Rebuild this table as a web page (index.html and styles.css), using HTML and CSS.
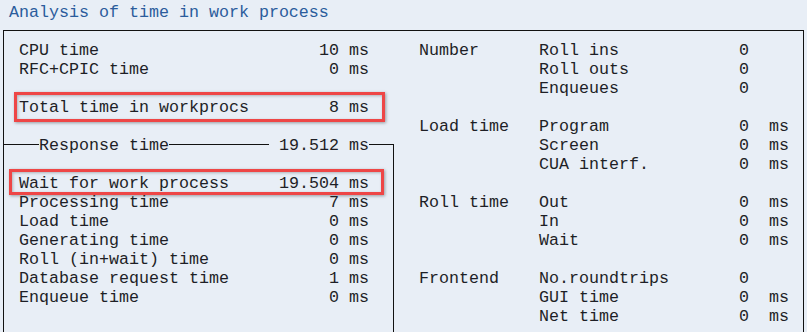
FILE: index.html
```html
<!DOCTYPE html>
<html>
<head>
<meta charset="utf-8">
<link rel="stylesheet" href="styles.css">
</head>
<body>
<div class="screen">
  <div class="title">Analysis of time in work process</div>
  <div class="frame">
    <div class="left">
      <div class="rows">
        <div class="row"><span>CPU time</span><span>10 ms</span></div>
        <div class="row"><span>RFC+CPIC time</span><span>0 ms</span></div>
        <div class="row"></div>
        <div class="row hl hl-total"><span>Total time in workprocs</span><span>8 ms</span></div>
        <div class="row"></div>
      </div>
      <div class="group">
        <div class="legend">
          <span class="ln ln-a"></span>
          <span class="legend-text">Response time</span>
          <span class="ln ln-b"></span>
          <span class="legend-val">19.512 ms</span>
          <span class="ln ln-c"></span>
        </div>
        <div class="rows">
          <div class="row"></div>
          <div class="row hl hl-wait"><span>Wait for work process</span><span>19.504 ms</span></div>
          <div class="row"><span>Processing time</span><span>7 ms</span></div>
          <div class="row"><span>Load time</span><span>0 ms</span></div>
          <div class="row"><span>Generating time</span><span>0 ms</span></div>
          <div class="row"><span>Roll (in+wait) time</span><span>0 ms</span></div>
          <div class="row"><span>Database request time</span><span>1 ms</span></div>
          <div class="row"><span>Enqueue time</span><span>0 ms</span></div>
        </div>
      </div>
    </div>
    <div class="right">
      <div class="rrow"><span>Number</span><span>Roll ins</span><span>0</span><span></span></div>
      <div class="rrow"><span></span><span>Roll outs</span><span>0</span><span></span></div>
      <div class="rrow"><span></span><span>Enqueues</span><span>0</span><span></span></div>
      <div class="rrow"></div>
      <div class="rrow"><span>Load time</span><span>Program</span><span>0</span><span>ms</span></div>
      <div class="rrow"><span></span><span>Screen</span><span>0</span><span>ms</span></div>
      <div class="rrow"><span></span><span>CUA interf.</span><span>0</span><span>ms</span></div>
      <div class="rrow"></div>
      <div class="rrow"><span>Roll time</span><span>Out</span><span>0</span><span>ms</span></div>
      <div class="rrow"><span></span><span>In</span><span>0</span><span>ms</span></div>
      <div class="rrow"><span></span><span>Wait</span><span>0</span><span>ms</span></div>
      <div class="rrow"></div>
      <div class="rrow"><span>Frontend</span><span>No.roundtrips</span><span>0</span><span></span></div>
      <div class="rrow"><span></span><span>GUI time</span><span>0</span><span>ms</span></div>
      <div class="rrow"><span></span><span>Net time</span><span>0</span><span>ms</span></div>
    </div>
  </div>
</div>
</body>
</html>
```

FILE: styles.css
```css
html, body {
  margin: 0;
  padding: 0;
  background: #e8eef6;
  overflow: hidden;
}

.screen {
  width: 807px;
  height: 332px;
  overflow: hidden;
  font-family: "Liberation Mono", "Courier New", monospace;
  font-size: 16.6667px;
  line-height: 19px;
  color: #1e1f26;
}

.row span,
.rrow span,
.legend span,
.title {
  white-space: pre;
}

.title {
  color: #2b5c9c;
  padding: 3px 0 0 9px;
  height: 19px;
  margin-bottom: 8px;
}

.frame {
  margin-left: 3px;
  width: 799px;
  height: 400px;
  border: 1px solid #111;
  border-bottom: none;
  padding-top: 10px;
  display: flex;
  align-items: flex-start;
}

.left {
  width: 390px;
  display: flex;
  flex-direction: column;
}

.rows {
  display: flex;
  flex-direction: column;
  padding-left: 15px;
}

.row {
  position: relative;
  width: 350px;
  height: 19px;
  display: flex;
  justify-content: space-between;
}

.hl::after {
  content: "";
  position: absolute;
  border: 3px solid #ee4646;
  box-shadow: 1px 1px 3px rgba(0, 0, 0, 0.35), inset 1px 1px 3px rgba(0, 0, 0, 0.25);
}

.hl-total::after {
  left: -5px;
  right: -16px;
  top: -6px;
  bottom: -5px;
}

.hl-wait::after {
  left: -10px;
  right: -15px;
  top: -5px;
  bottom: -2px;
}

.group {
  margin-top: 8px;
  border-right: 1px solid #111;
  height: 300px;
}

.legend {
  margin-top: -8px;
  height: 19px;
  display: flex;
  align-items: flex-start;
}

.ln {
  height: 1px;
  margin-top: 8px;
  background: #111;
}

.ln-a { width: 35px; }
.ln-b { flex: 1; margin-right: 10px; }
.ln-c { width: 24px; }

.right {
  margin-left: 25px;
  display: flex;
  flex-direction: column;
}

.rrow {
  height: 19px;
  display: grid;
  grid-template-columns: 120px 200px 30px 20px;
}
```
